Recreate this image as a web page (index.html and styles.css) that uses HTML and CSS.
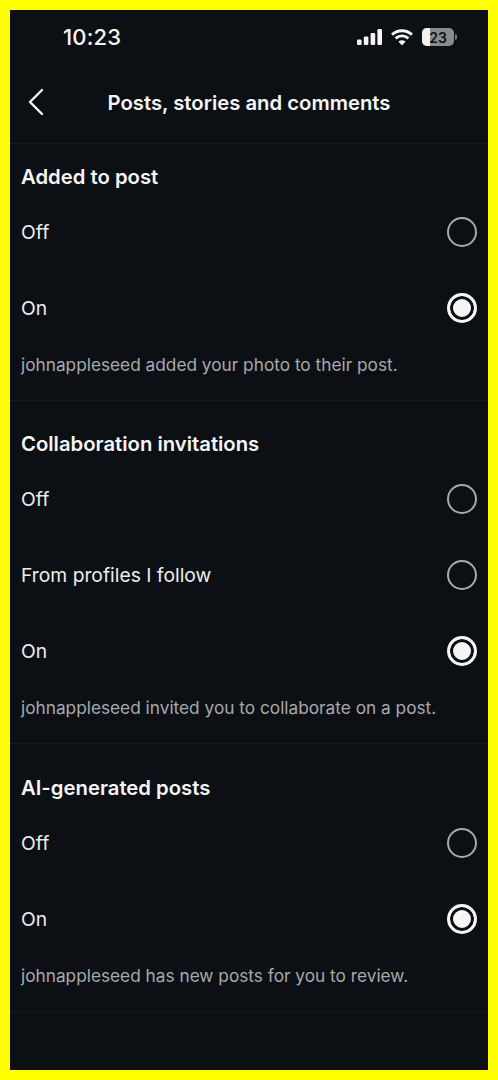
FILE: index.html
```html
<!DOCTYPE html>
<html lang="en">
<head>
<meta charset="utf-8">
<title>Posts, stories and comments</title>
<link rel="stylesheet" href="styles.css">
</head>
<body>
<main class="screen">
  <div class="status">
    <span class="time">10:23</span>
    <div class="status-icons">
      <svg class="signal" width="25" height="16" viewBox="0 0 25 16"><rect x="0" y="10.5" width="4.6" height="5.5" rx="1.2"/><rect x="6.8" y="7.5" width="4.6" height="8.5" rx="1.2"/><rect x="13.6" y="4" width="4.6" height="12" rx="1.2"/><rect x="20.4" y="0" width="4.6" height="16" rx="1.2"/></svg>
      <svg class="wifi" width="22" height="17" viewBox="0 0 22 17"><path d="M1 5.6C6.8 0.4 15.2 0.4 21 5.6" /><path d="M4.6 9.4C8.4 6 13.6 6 17.4 9.4"/><path class="wifi-dot" d="M11 16.5L7.4 12.6C9.6 10.8 12.4 10.8 14.6 12.6Z"/></svg>
      <div class="battery"><span class="battery-fill"></span><span class="battery-num">23</span></div>
      <span class="battery-cap"></span>
    </div>
  </div>
  <header class="nav">
    <svg class="back" width="18" height="28" viewBox="0 0 18 28"><path d="M15 2L3 14L15 26"/></svg>
    <h1>Posts, stories and comments</h1>
  </header>

  <section class="group first">
    <h2>Added to post</h2>
    <div class="row"><span>Off</span><i class="radio"></i></div>
    <div class="row"><span>On</span><i class="radio on"></i></div>
    <p>johnappleseed added your photo to their post.</p>
  </section>

  <section class="group">
    <h2>Collaboration invitations</h2>
    <div class="row"><span>Off</span><i class="radio"></i></div>
    <div class="row"><span>From profiles I follow</span><i class="radio"></i></div>
    <div class="row"><span>On</span><i class="radio on"></i></div>
    <p>johnappleseed invited you to collaborate on a post.</p>
  </section>

  <section class="group last">
    <h2>AI-generated posts</h2>
    <div class="row"><span>Off</span><i class="radio"></i></div>
    <div class="row"><span>On</span><i class="radio on"></i></div>
    <p>johnappleseed has new posts for you to review.</p>
  </section>
</main>
</body>
</html>
```
FILE: styles.css
```css
* { box-sizing: border-box; }
html, body { margin: 0; padding: 0; }
body {
  width: 498px;
  height: 1080px;
  background: #ffff00;
  padding: 10px;
  font-family: Inter, "Liberation Sans", sans-serif;
  color: #f5f5f5;
  overflow: hidden;
}
.screen {
  width: 478px;
  height: 1060px;
  background: #0c1014;
  overflow: hidden;
}
.status {
  height: 54px;
  display: flex;
  align-items: center;
  justify-content: space-between;
  padding: 0 31px 0 53px;
}
.time { font-size: 22px; font-weight: 500; letter-spacing: 0.2px; color: #f5f5f5; }
.status-icons { display: flex; align-items: center; }
.signal { fill: #f5f5f5; margin-right: 9px; }
.wifi { fill: none; margin-right: 9px; }
.wifi path { stroke: #f5f5f5; stroke-width: 2.9; fill: none; }
.wifi .wifi-dot { stroke: none; fill: #f5f5f5; }
.battery {
  position: relative;
  width: 32px;
  height: 18px;
  border-radius: 5px;
  background: #8a8b8c;
  overflow: hidden;
  display: flex;
  align-items: center;
  justify-content: center;
}
.battery-fill { position: absolute; left: 0; top: 0; bottom: 0; width: 8px; background: #f2f2f2; }
.battery-num { position: relative; font-size: 14px; font-weight: 600; color: #0c1014; }
.battery-cap { width: 2px; height: 6px; margin-left: 1px; background: #77787a; border-radius: 0 2px 2px 0; }
.nav {
  height: 80px;
  position: relative;
  display: flex;
  align-items: center;
  justify-content: center;
  padding-bottom: 2px;
  border-bottom: 1px solid #171b1f;
}
.back { position: absolute; left: 17px; top: 24px; fill: none; }
.back path { stroke: #f5f5f5; stroke-width: 2.4; stroke-linecap: round; stroke-linejoin: round; fill: none; }
.nav h1 { margin: 0; font-size: 20.3px; font-weight: 600; color: #f5f5f5; }
.group { border-bottom: 1px solid #171b1f; padding: 10px 11px 0; }
.group.first { padding-top: 0; }
.group.last { padding-top: 11px; }
h2 {
  margin: 0;
  height: 50px;
  padding-top: 15px;
  display: flex;
  align-items: center;
  font-size: 20.3px;
  font-weight: 600;
  color: #f5f5f5;
}
.row {
  height: 76px;
  display: flex;
  align-items: center;
  justify-content: space-between;
  font-size: 19.3px;
  color: #ededed;
}
.radio {
  display: block;
  width: 30px;
  height: 30px;
  border: 2px solid #a8a9ac;
  border-radius: 50%;
}
.radio.on {
  border: 3px solid #f5f5f5;
  background: #f5f5f5;
  box-shadow: inset 0 0 0 3px #0c1014;
}
.group p {
  margin: 0;
  height: 54px;
  padding: 1px 0 17px;
  line-height: 36px;
  font-size: 17.25px;
  color: #a8a9ac;
}
```
